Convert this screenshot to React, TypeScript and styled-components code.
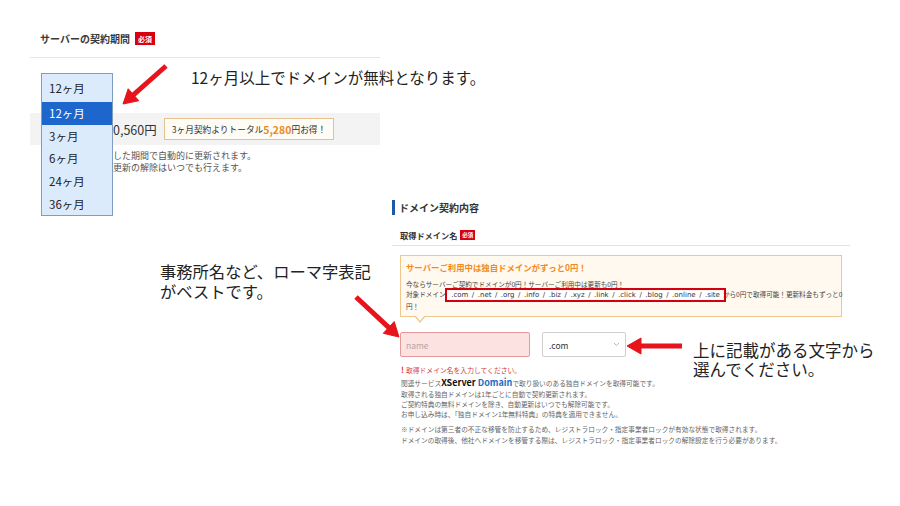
import React from 'react'
import styled, { createGlobalStyle } from 'styled-components'

// STYLES
const GlobalStyles = createGlobalStyle`
  html, body {
    margin: 0;
    padding: 0;
    background: #ffffff;
  }
  body {
    font-family: "Noto Sans CJK JP", "Noto Sans", sans-serif;
    color: #333333;
  }
`

const Slide = styled.div`
  position: relative;
  width: 900px;
  height: 506px;
  overflow: hidden;
  background: #ffffff;
`

// screenshot pieces placed on the slide canvas
const Shot = styled.section<{ $left: number; $top: number; $width: number; $height: number }>`
  position: absolute;
  left: ${p => p.$left}px;
  top: ${p => p.$top}px;
  width: ${p => p.$width}px;
  height: ${p => p.$height}px;
  display: flex;
  flex-direction: column;
  background: #ffffff;
`

const PeriodHeader = styled.div`
  display: flex;
  align-items: center;
  gap: 5px;
  height: 37px;
  padding-left: 10px;
  border-bottom: 1px solid #e6e6e6;
  font-size: 10px;
  font-weight: 700;
  color: #3a3a3a;
`

const Badge = styled.span`
  display: inline-flex;
  align-items: center;
  justify-content: center;
  width: 20px;
  height: 13px;
  background: #d7000f;
  color: #ffffff;
  font-size: 7px;
  font-weight: 700;
`

const PriceBand = styled.div`
  display: flex;
  align-items: center;
  gap: 7px;
  height: 32px;
  margin-top: 55px;
  padding-left: 83px;
  background: #f3f3f3;
`

const Price = styled.span`
  font-size: 12.5px;
  color: #333333;
`

const DealBox = styled.span`
  display: inline-flex;
  align-items: center;
  height: 20px;
  padding: 0 7px;
  border: 1px solid #e6c08e;
  background: #fffcf6;
  font-size: 8.7px;
  color: #333333;
  white-space: nowrap;

  b {
    font-size: 10.5px;
    color: #ee8a22;
  }
`

const PeriodNotes = styled.div`
  margin-top: 5px;
  padding-left: 83px;
  font-size: 9px;
  line-height: 12px;
  color: #555555;
`

const Dropdown = styled.div`
  position: absolute;
  left: 11px;
  top: 53px;
  width: 70px;
  display: flex;
  flex-direction: column;
  border: 1px solid #7f9dc0;
  background: #dcebfb;
  font-size: 11.5px;
  color: #222222;
`

const DropdownCurrent = styled.div`
  display: flex;
  align-items: center;
  height: 28px;
  padding-left: 7px;
`

const DropdownOption = styled.div<{ $active?: boolean }>`
  display: flex;
  align-items: center;
  height: 22.6px;
  padding-left: 7px;
  background: ${p => (p.$active ? '#1c66cc' : 'transparent')};
  color: ${p => (p.$active ? '#ffffff' : '#222222')};
`

const SectionHead = styled.div`
  display: flex;
  align-items: center;
  height: 15px;
  margin: 5px 0 0 2px;
  padding-left: 4px;
  border-left: 3px solid #1d5aa6;
  font-size: 10px;
  font-weight: 700;
  color: #333333;
`

const FieldHead = styled.div`
  display: flex;
  align-items: center;
  gap: 3px;
  height: 28px;
  margin: 10px 0 0 2px;
  padding-left: 8px;
  border-bottom: 1px solid #e3e3e3;
  font-size: 8.2px;
  font-weight: 700;
  color: #333333;

  ${Badge} {
    width: 15px;
    height: 10px;
    font-size: 5.5px;
  }
`

const InfoBox = styled.div`
  position: relative;
  width: 428px;
  margin: 9px 0 0 10px;
  padding: 5px 7px 5px 5px;
  border: 1px solid #efc78e;
  background: #fff9ef;

  &::before,
  &::after {
    content: '';
    position: absolute;
    left: 13px;
    border-style: solid;
    border-color: transparent;
  }
  &::before {
    bottom: -7px;
    border-width: 7px 6px 0 6px;
    border-top-color: #efc78e;
  }
  &::after {
    bottom: -5px;
    left: 14px;
    border-width: 6px 5px 0 5px;
    border-top-color: #fff9ef;
  }
`

const InfoTitle = styled.div`
  font-size: 8.4px;
  line-height: 12px;
  font-weight: 700;
  color: #f08a24;
`

const InfoBody = styled.div`
  margin-top: 6px;
  font-size: 6.6px;
  line-height: 10.5px;
  color: #444444;
  white-space: nowrap;
`

const DomainMark = styled.span`
  padding: 0 3px;
  margin-left: -4px;
  outline: 2px solid #d3000f;
  outline-offset: 1px;
  background: #ffffff;
  font-family: "DejaVu Sans", Verdana, sans-serif;
  font-size: 7px;
  word-spacing: 1.3px;
  color: #333333;
`

const InputRow = styled.div`
  display: flex;
  gap: 12px;
  margin: 15px 0 0 10px;
`

const NameInput = styled.input`
  box-sizing: border-box;
  width: 130px;
  height: 25px;
  padding: 0 5px;
  border: 1px solid #e49a9a;
  border-radius: 2px;
  background: #fde2e2;
  font-family: inherit;
  font-size: 8.5px;
  outline: none;

  &::placeholder {
    color: #b8a3a3;
  }
`

const DomainSelect = styled.div`
  box-sizing: border-box;
  display: flex;
  align-items: center;
  justify-content: space-between;
  width: 84px;
  height: 25px;
  padding: 0 5px 0 6px;
  border: 1px solid #cfcfcf;
  border-radius: 2px;
  background: #ffffff;
  font-size: 8.5px;
  color: #333333;
`

const ErrorText = styled.div`
  margin: 8px 0 0 11px;
  font-size: 6.8px;
  line-height: 10px;
  color: #d43a3a;

  b {
    font-size: 8px;
    margin-right: 2px;
  }
`

const Notes = styled.div<{ $gap: number }>`
  margin: ${p => p.$gap}px 0 0 11px;
  font-size: 6.7px;
  line-height: 10.3px;
  color: #666666;
  white-space: nowrap;
`

const Brand = styled.span`
  font-size: 9px;
  font-weight: 700;
  color: #111111;

  em {
    font-style: normal;
    color: #1c6cc4;
  }
`

const Callout = styled.div<{ $left: number; $top: number; $size: number; $line: number }>`
  position: absolute;
  left: ${p => p.$left}px;
  top: ${p => p.$top}px;
  font-size: ${p => p.$size}px;
  line-height: ${p => p.$line}px;
  color: #222222;
  white-space: nowrap;
`

const ArrowLayer = styled.svg`
  position: absolute;
  inset: 0;
  pointer-events: none;
`

const Arrow = ({ x1, y1, x2, y2 }: { x1: number; y1: number; x2: number; y2: number }) => {
  const len = Math.hypot(x2 - x1, y2 - y1)
  const ux = (x2 - x1) / len
  const uy = (y2 - y1) / len
  const head = 14
  const half = 8
  const bx = x2 - ux * head
  const by = y2 - uy * head
  const points = [
    `${x2},${y2}`,
    `${bx - uy * half},${by + ux * half}`,
    `${bx + uy * half},${by - ux * half}`
  ].join(' ')

  return (
    <g fill="#e8141c" stroke="#e8141c">
      <line x1={x1} y1={y1} x2={bx + ux * 2} y2={by + uy * 2} strokeWidth={5} />
      <polygon points={points} strokeWidth={1} strokeLinejoin="round" />
    </g>
  )
}

const Chevron = () => (
  <svg width="7" height="5" viewBox="0 0 7 5">
    <path d="M1 1l2.5 2.5L6 1" fill="none" stroke="#b5b5b5" strokeWidth="1" />
  </svg>
)

const periods = ['12ヶ月', '3ヶ月', '6ヶ月', '24ヶ月', '36ヶ月']

const App = () => {
  return (
    <>
      <GlobalStyles />
      <Slide>
        <Shot $left={30} $top={20} $width={350} $height={200}>
          <PeriodHeader>
            サーバーの契約期間<Badge>必須</Badge>
          </PeriodHeader>
          <PriceBand>
            <Price>0,560円</Price>
            <DealBox>
              3ヶ月契約よりトータル<b>5,280</b>円お得！
            </DealBox>
          </PriceBand>
          <PeriodNotes>
            した期間で自動的に更新されます。
            <br />
            更新の解除はいつでも行えます。
          </PeriodNotes>

          <Dropdown>
            <DropdownCurrent>12ヶ月</DropdownCurrent>
            {periods.map((p, i) => (
              <DropdownOption key={p} $active={i === 0}>{p}</DropdownOption>
            ))}
          </Dropdown>
        </Shot>

        <Shot $left={390} $top={195} $width={460} $height={250}>
          <SectionHead>ドメイン契約内容</SectionHead>
          <FieldHead>
            取得ドメイン名<Badge>必須</Badge>
          </FieldHead>

          <InfoBox>
            <InfoTitle>サーバーご利用中は独自ドメインがずっと0円！</InfoTitle>
            <InfoBody>
              今ならサーバーご契約でドメインが0円！サーバーご利用中は更新も0円！
              <br />
              対象ドメイン：
              <DomainMark>
                .com / .net / .org / .info / .biz / .xyz / .link / .click / .blog / .online / .site
              </DomainMark>
              から0円で取得可能！更新料金もずっと0
              <br />
              円！
            </InfoBody>
          </InfoBox>

          <InputRow>
            <NameInput placeholder="name" />
            <DomainSelect>
              .com
              <Chevron />
            </DomainSelect>
          </InputRow>

          <ErrorText>
            <b>!</b>取得ドメイン名を入力してください。
          </ErrorText>

          <Notes $gap={3}>
            関連サービス<Brand>XServer <em>Domain</em></Brand>で取り扱いのある独自ドメインを取得可能です。
            <br />
            取得される独自ドメインは1年ごとに自動で契約更新されます。
            <br />
            ご契約特典の無料ドメインを除き、自動更新はいつでも解除可能です。
            <br />
            お申し込み時は、「独自ドメイン1年無料特典」の特典を適用できません。
          </Notes>
          <Notes $gap={5}>
            ※ドメインは第三者の不正な移管を防止するため、レジストラロック・指定事業者ロックが有効な状態で取得されます。
            <br />
            ドメインの取得後、他社へドメインを移管する際は、レジストラロック・指定事業者ロックの解除設定を行う必要があります。
          </Notes>
        </Shot>

        <Callout $left={191} $top={67} $size={15.5} $line={20}>
          12ヶ月以上でドメインが無料となります。
        </Callout>
        <Callout $left={160} $top={261} $size={16.3} $line={20}>
          事務所名など、ローマ字表記
          <br />
          がベストです。
        </Callout>
        <Callout $left={693} $top={341} $size={16.5} $line={19}>
          上に記載がある文字から
          <br />
          選んでください。
        </Callout>

        <ArrowLayer width={900} height={506}>
          <Arrow x1={166} y1={66} x2={123} y2={104} />
          <Arrow x1={356} y1={297} x2={399} y2={337} />
          <Arrow x1={682} y1={346} x2={627} y2={346} />
        </ArrowLayer>
      </Slide>
    </>
  )
}

export default App
